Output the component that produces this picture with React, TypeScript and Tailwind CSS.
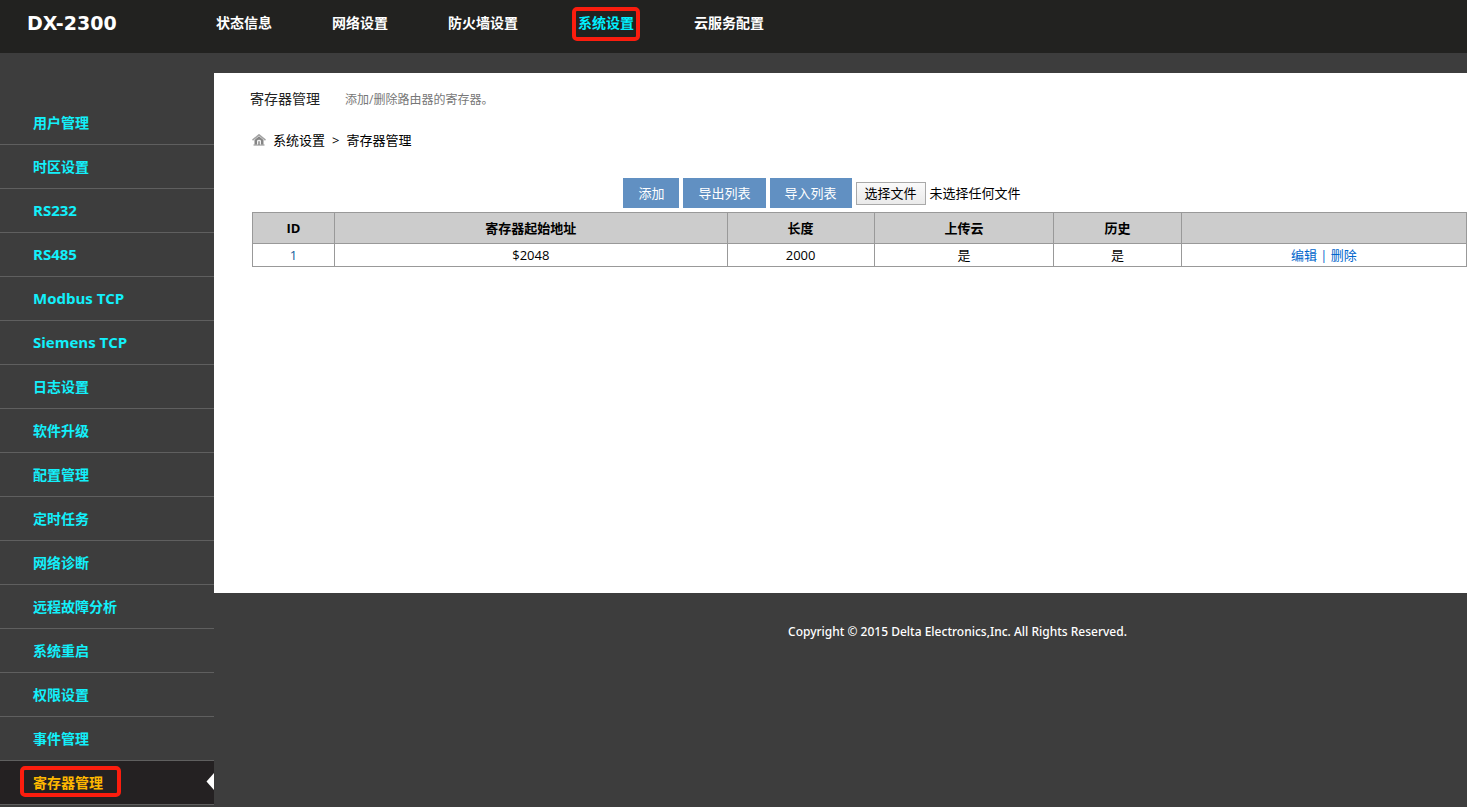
import React, { useState } from 'react';

const topMenu = ['状态信息', '网络设置', '防火墙设置', '系统设置', '云服务配置'];

const sideMenu = [
  '用户管理',
  '时区设置',
  'RS232',
  'RS485',
  'Modbus TCP',
  'Siemens TCP',
  '日志设置',
  '软件升级',
  '配置管理',
  '定时任务',
  '网络诊断',
  '远程故障分析',
  '系统重启',
  '权限设置',
  '事件管理',
  '寄存器管理',
];

// Protokollnamen sind lateinisch und etwas groesser
const protocols = ['RS232', 'RS485', 'Modbus TCP', 'Siemens TCP'];

const columns = [
  { title: 'ID', width: 'w-[6.75%]' },
  { title: '寄存器起始地址', width: 'w-[32.35%]' },
  { title: '长度', width: 'w-[12.1%]' },
  { title: '上传云', width: 'w-[14.8%]' },
  { title: '历史', width: 'w-[10.5%]' },
  { title: '', width: 'w-[23.5%]' },
];

const registers = [
  { id: 1, address: '$2048', length: 2000, cloud: '是', history: '是' },
];

const HomeIcon = () => (
  <svg className="w-[14px] h-[12px]" viewBox="0 0 14 12" aria-hidden="true">
    <path d="M0.5 6.2 7 0.8l6.5 5.4" fill="none" stroke="#a3a3a3" strokeWidth="1.5" />
    <path d="M2.5 6 7 2.2 11.5 6v4.8h-9z" fill="#858585" />
    <path d="M1.5 11h11" stroke="#999999" strokeWidth="1.2" />
    <path d="M5 10.4V7q0-1.2 2-1.2T9 7v3.4z" fill="#f2f2f2" />
    <path d="M6.3 7.2h1.4v3.8H6.3z" fill="#858585" />
  </svg>
);

const Header = () => (
  <header className="flex h-[53px] bg-[#222220] text-white">
    <h1 className="w-[216px] shrink-0 pl-[27px] pt-[10px] text-[19px] leading-[26px] font-bold font-['DejaVu_Sans',sans-serif]">
      DX-2300
    </h1>
    <nav className="flex gap-[60px] pt-[12px] text-[14px] leading-[22px] font-bold whitespace-nowrap">
      {topMenu.map((item) => (
        <a
          key={item}
          href="#"
          className={item === '系统设置' ? 'relative h-[22px] text-[#00f0ff]' : 'h-[22px]'}>
          {item}
          {item === '系统设置' && (
            <span className="absolute -inset-x-[6px] -top-[5px] -bottom-[7px] rounded-[5px] border-4 border-[#fb1d0e]" />
          )}
        </a>
      ))}
    </nav>
  </header>
);

const Sidebar = () => (
  <aside className="w-[214px] shrink-0 pt-[48px]">
    <ul>
      {sideMenu.map((item) => {
        const active = item === '寄存器管理';
        const textSize = protocols.includes(item) ? 'text-[15px]' : 'text-[14px]';
        return (
          <li
            key={item}
            className={
              active
                ? 'relative border-b border-[#5f5f5f] bg-[#242122] text-[#ffb800]'
                : 'border-b border-[#5f5f5f] text-[#12f0fb]'
            }>
            <a
              href="#"
              className={`${textSize} block h-[43px] pl-[33px] leading-[43px] font-bold whitespace-nowrap`}>
              {item}
            </a>
            {active && (
              <>
                <span className="absolute left-[20px] top-[5px] h-[31px] w-[101px] rounded-[5px] border-4 border-[#fb1d0e]" />
                <svg className="absolute right-0 top-[12px] h-[17px] w-[8px]" viewBox="0 0 8 17">
                  <path d="M8 0v17L0.5 8.5z" fill="#fff" />
                </svg>
              </>
            )}
          </li>
        );
      })}
    </ul>
  </aside>
);

const App = () => {
  const [fileName, setFileName] = useState('');

  const buttonClass =
    'h-[30px] bg-[#6190c2] px-[15px] text-[13px] leading-[30px] text-white whitespace-nowrap';

  return (
    <div className="min-h-screen bg-[#3d3d3d] text-black font-['Open_Sans','Noto_Sans_CJK_SC',sans-serif]">
      <Header />
      <div className="flex">
        <Sidebar />
        <div className="min-w-0 flex-1 pt-[20px]">
          <main className="min-h-[520px] bg-white pl-[38px] pt-[16px]">
            {/* Titel */}
            <div className="-ml-[2px] flex items-baseline gap-[25px] leading-[20px]">
              <h2 className="text-[14px] text-[#222222]">寄存器管理</h2>
              <p className="text-[12px] text-[#777777]">添加/删除路由器的寄存器。</p>
            </div>

            <nav className="mt-[20px] flex h-[20px] items-center gap-[7px] text-[13px] leading-[20px]">
              <HomeIcon />
              <a href="#">系统设置</a>
              <span>&gt;</span>
              <a href="#">寄存器管理</a>
            </nav>

            {/* Buttons */}
            <div className="mt-[28px] flex items-start justify-center gap-[4px]">
              <button type="button" className={buttonClass}>
                添加
              </button>
              <button type="button" className={buttonClass}>
                导出列表
              </button>
              <button type="button" className={buttonClass}>
                导入列表
              </button>
              <div className="mt-[4px] flex w-[240px] items-center gap-[4px] text-[13px] whitespace-nowrap">
                <input
                  type="file"
                  id="datei"
                  className="sr-only"
                  onChange={(e) => setFileName(e.target.files?.[0]?.name ?? '')}
                />
                <label
                  htmlFor="datei"
                  className="h-[23px] border border-[#a9a9a9] bg-gradient-to-b from-[#fafafa] to-[#eaeaea] px-[8px] leading-[21px]">
                  选择文件
                </label>
                <span>{fileName || '未选择任何文件'}</span>
              </div>
            </div>

            {/* Tabelle */}
            <table className="mt-[4px] w-full table-fixed border-collapse text-center text-[13px]">
              <thead>
                <tr className="h-[31px] bg-[#cccccc]">
                  {columns.map((col) => (
                    <th
                      key={col.title}
                      className={`${col.width} border border-[#999999] leading-[20px] font-bold`}>
                      {col.title}
                    </th>
                  ))}
                </tr>
              </thead>
              <tbody>
                {registers.map((reg) => (
                  <tr key={reg.id} className="h-[23px] leading-[20px]">
                    <td className="border border-[#999999] text-[#16609c]">{reg.id}</td>
                    <td className="border border-[#999999]">{reg.address}</td>
                    <td className="border border-[#999999]">{reg.length}</td>
                    <td className="border border-[#999999]">{reg.cloud}</td>
                    <td className="border border-[#999999]">{reg.history}</td>
                    <td className="border border-[#999999] text-[#0066cc]">
                      <a href="#">编辑</a> | <a href="#">删除</a>
                    </td>
                  </tr>
                ))}
              </tbody>
            </table>
          </main>

          <footer className="pl-[234px] pt-[29px] text-center text-[12px] leading-[20px] font-medium text-white font-['Noto_Sans',sans-serif]">
            Copyright © 2015 Delta Electronics,Inc. All Rights Reserved.
          </footer>
        </div>
      </div>
    </div>
  );
};

export default App;
